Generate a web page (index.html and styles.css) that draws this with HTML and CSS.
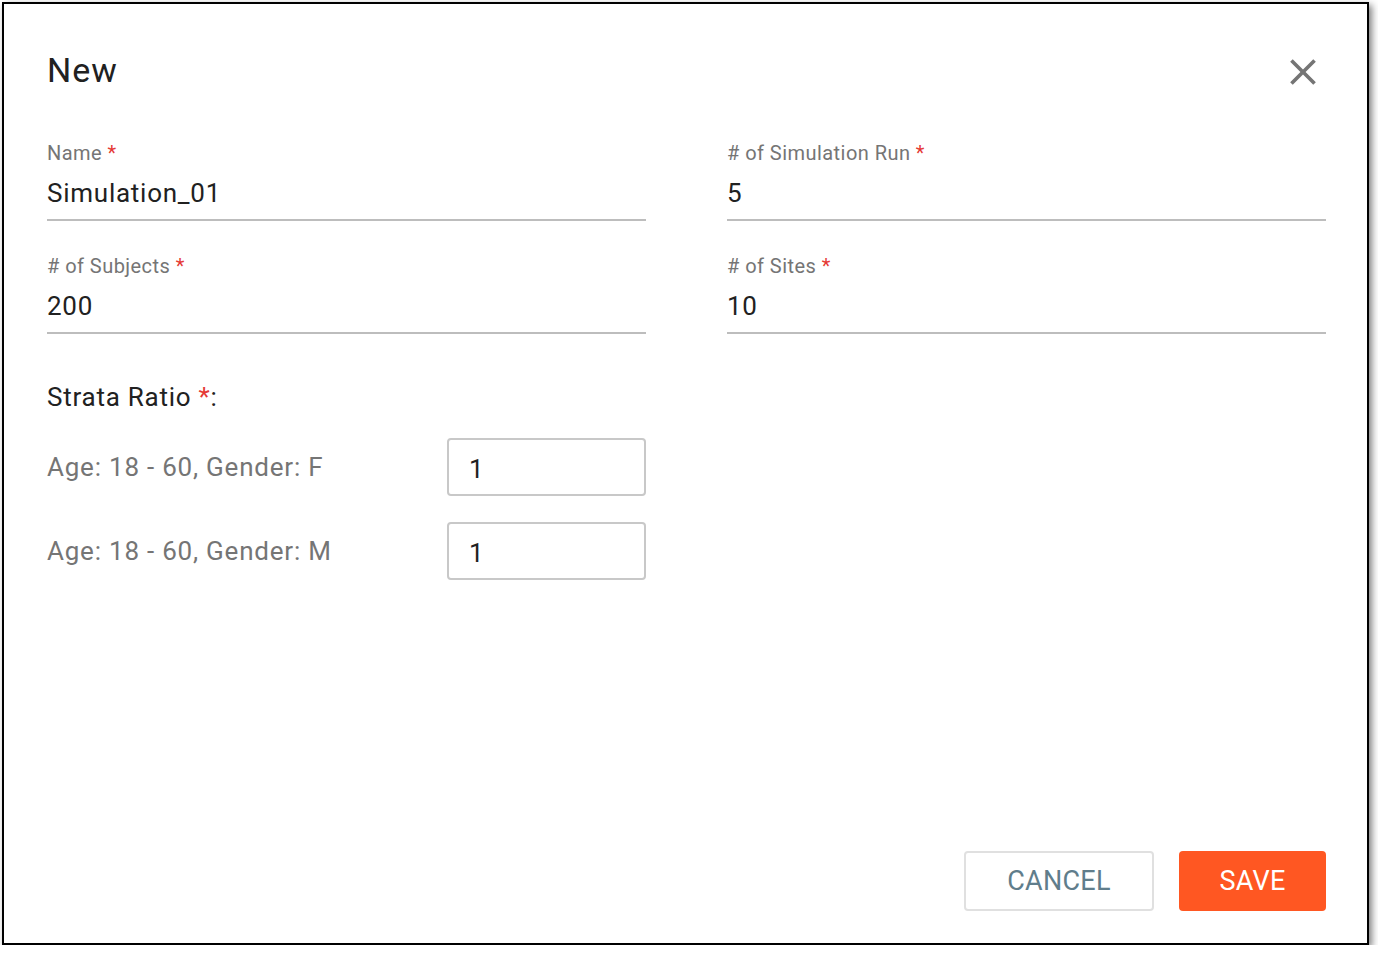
FILE: index.html
```html
<!DOCTYPE html>
<html lang="en">
<head>
<meta charset="utf-8">
<title>New</title>
<link rel="stylesheet" href="styles.css">
</head>
<body>
<div class="dialog">
  <div class="header">
    <h1 class="title">New</h1>
    <button class="close" aria-label="Close">
      <svg viewBox="0 0 24 24" width="44" height="44"><path d="M19 6.41L17.59 5 12 10.59 6.41 5 5 6.41 10.59 12 5 17.59 6.41 19 12 13.41 17.59 19 19 17.59 13.41 12z" fill="#757575"/></svg>
    </button>
  </div>
  <div class="fields">
    <div class="field">
      <label class="label">Name <span class="req">*</span></label>
      <div class="value">Simulation_01</div>
    </div>
    <div class="field">
      <label class="label"># of Simulation Run <span class="req">*</span></label>
      <div class="value">5</div>
    </div>
    <div class="field">
      <label class="label"># of Subjects <span class="req">*</span></label>
      <div class="value">200</div>
    </div>
    <div class="field">
      <label class="label"># of Sites <span class="req">*</span></label>
      <div class="value">10</div>
    </div>
  </div>
  <div class="strata">
    <div class="strata-title">Strata Ratio <span class="req">*</span>:</div>
    <div class="strata-rows">
      <div class="strata-label">Age: 18 - 60, Gender: F</div>
      <div class="box">1</div>
      <div class="strata-label">Age: 18 - 60, Gender: M</div>
      <div class="box">1</div>
    </div>
  </div>
  <div class="footer">
    <button class="btn btn-cancel">CANCEL</button>
    <button class="btn btn-save">SAVE</button>
  </div>
</div>
</body>
</html>
```
FILE: styles.css
```css
html, body {
  margin: 0;
  padding: 0;
  background: #fff;
}
body {
  font-family: Roboto, "Liberation Sans", Arial, sans-serif;
  color: #212121;
}
.dialog {
  box-sizing: border-box;
  margin: 2px 0 0 2px;
  width: 1367px;
  height: 943px;
  border: 2px solid #000;
  background: #fff;
  box-shadow: 3px 3px 7px rgba(0, 0, 0, 0.5);
  padding: 46px 41px 32px 43px;
  display: flex;
  flex-direction: column;
}
.header {
  display: flex;
  justify-content: space-between;
  align-items: flex-start;
  height: 44px;
}
.title {
  margin: 0;
  font-size: 34px;
  line-height: 40px;
  font-weight: 400;
  letter-spacing: 1px;
  color: #212121;
}
.close {
  border: 0;
  background: none;
  padding: 0;
  margin: 0 1px 0 0;
  width: 44px;
  height: 44px;
  cursor: pointer;
}
.close svg {
  display: block;
}
.fields {
  margin-top: 47px;
  display: grid;
  grid-template-columns: 599px 599px;
  column-gap: 81px;
  row-gap: 33px;
}
.field {
  display: flex;
  flex-direction: column;
  border-bottom: 2px solid #bdbdbd;
  padding-bottom: 10px;
}
.label {
  font-size: 20px;
  line-height: 24px;
  letter-spacing: 0.45px;
  color: #757575;
}
.req {
  color: #e53935;
}
.value {
  margin-top: 12px;
  font-size: 26px;
  line-height: 32px;
  letter-spacing: 0.75px;
  color: #212121;
}
.strata {
  margin-top: 47px;
}
.strata-title {
  font-size: 26px;
  line-height: 32px;
  letter-spacing: 0.75px;
  color: #212121;
}
.strata-rows {
  margin-top: 25px;
  display: grid;
  grid-template-columns: 400px 199px;
  row-gap: 26px;
  align-items: center;
}
.strata-label {
  font-size: 26px;
  line-height: 32px;
  letter-spacing: 0.78px;
  color: #757575;
}
.box {
  box-sizing: border-box;
  height: 58px;
  border: 2px solid #c8c8c8;
  border-radius: 4px;
  padding: 2px 20px 0;
  font-size: 26px;
  line-height: 54px;
  color: #212121;
}
.footer {
  margin-top: auto;
  display: flex;
  justify-content: flex-end;
  gap: 25px;
}
.btn {
  box-sizing: border-box;
  height: 60px;
  border-radius: 4px;
  font-family: Roboto, "Liberation Sans", Arial, sans-serif;
  font-size: 27px;
  font-weight: 400;
  letter-spacing: 0.3px;
  cursor: pointer;
}
.btn-cancel {
  width: 190px;
  background: #fff;
  border: 2px solid #e0e0e0;
  color: #607d8b;
}
.btn-save {
  width: 147px;
  background: #ff5722;
  border: 0;
  color: #fff;
}
```
